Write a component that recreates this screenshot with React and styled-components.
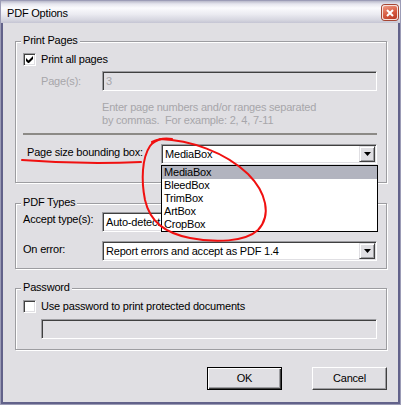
import styled, { createGlobalStyle } from "styled-components";

const GlobalStyle = createGlobalStyle`
  * { box-sizing: border-box; }
  body { margin: 0; background: #fff; }
`;

const FACE = "#e0dfe3";
const SHADOW = "#9d9da1";
const DARK = "#404040";
const GRAY_TEXT = "#a7a6aa";

const Window = styled.div`
  position: relative;
  width: 401px;
  height: 405px;
  display: flex;
  flex-direction: column;
  background: ${FACE};
  border: 1px solid #9c9cb6;
  font-family: "Liberation Sans", Arial, sans-serif;
  font-size: 11px;
  line-height: 13px;
  letter-spacing: -0.2px;
  color: #000;
`;

const TitleBar = styled.div`
  height: 22px;
  flex: none;
  display: flex;
  align-items: center;
  justify-content: space-between;
  padding: 2px 2px 0 6px;
  background: linear-gradient(
    180deg,
    #b9b9ca 0px,
    #e6e6ee 3px,
    #fbfbfd 7px,
    #ececf2 13px,
    #d6d6e0 19px,
    #c5c5d3 22px
  );
`;

const Title = styled.span`
  color: #000;
`;

const CloseButton = styled.button`
  width: 16px;
  height: 15px;
  padding: 0;
  margin-top: -1px;
  border: 1px solid #f6e2dc;
  border-radius: 3px;
  background: linear-gradient(160deg, #ef9a84 0%, #d65a3f 55%, #b83a25 100%);
  display: flex;
  align-items: center;
  justify-content: center;
  box-shadow: 0 0 0 1px #a64633;
`;

const Frame = styled.div`
  flex: 1;
  display: flex;
  flex-direction: column;
  border: 2px solid #62628a;
  border-top: none;
  padding: 18px 11px 0 12px;
`;

const Group = styled.div`
  position: relative;
  margin-top: ${({ $top }) => $top || 0}px;
  padding: ${({ $pad }) => $pad};
  border: 1px solid ${SHADOW};
  box-shadow: inset 1px 1px #fff, 1px 1px #fff;
  display: flex;
  flex-direction: column;
`;

const Legend = styled.span`
  position: absolute;
  top: -8px;
  left: 5px;
  padding: 0 2px;
  background: ${FACE};
`;

const CheckRow = styled.label`
  display: flex;
  align-items: center;
  gap: 5px;
  height: 13px;
`;

const CheckBox = styled.span`
  width: 13px;
  height: 13px;
  flex: none;
  display: flex;
  align-items: center;
  justify-content: center;
  background: #fff;
  border: 1px solid;
  border-color: ${SHADOW} #fff #fff ${SHADOW};
  box-shadow: inset 1px 1px ${DARK}, inset -1px -1px ${FACE};
`;

const FieldRow = styled.div`
  display: flex;
  align-items: ${({ $center }) => ($center ? "center" : "flex-start")};
  margin-top: ${({ $top }) => $top || 0}px;
  padding-left: ${({ $indent }) => $indent || 0}px;
`;

const Label = styled.span`
  flex: none;
  width: ${({ $width }) => $width}px;
  padding-left: ${({ $indent }) => $indent || 0}px;
  margin-top: ${({ $top }) => $top || 0}px;
  color: ${({ $disabled }) => ($disabled ? GRAY_TEXT : "#000")};
  white-space: nowrap;
`;

const TextBox = styled.div`
  flex: ${({ $grow }) => ($grow ? "1 1 auto" : "none")};
  height: 20px;
  margin-top: ${({ $top }) => $top || 0}px;
  margin-left: ${({ $left }) => $left || 0}px;
  margin-right: 1px;
  display: flex;
  align-items: center;
  padding-left: 3px;
  background: ${({ $disabled }) => ($disabled ? FACE : "#fff")};
  color: ${({ $disabled }) => ($disabled ? GRAY_TEXT : "#000")};
  border: 1px solid;
  border-color: ${SHADOW} #fff #fff ${SHADOW};
  box-shadow: inset 1px 1px ${DARK}, inset -1px -1px ${FACE};
`;

const Hint = styled.p`
  margin: 10px 0 0 79px;
  color: ${GRAY_TEXT};
  white-space: nowrap;
`;

const Separator = styled.div`
  height: 2px;
  margin-top: 6px;
  margin-right: 1px;
  background: #8c8a86;
`;

const ComboWrap = styled.div`
  position: relative;
  flex: 1;
  margin-right: 1px;
`;

const Combo = styled.div`
  height: 20px;
  display: flex;
  align-items: center;
  justify-content: space-between;
  padding: 0 1px 0 3px;
  background: #fff;
  border: 1px solid;
  border-color: ${SHADOW} #fff #fff ${SHADOW};
  box-shadow: inset 1px 1px ${DARK}, inset -1px -1px ${FACE};
  white-space: nowrap;
  overflow: hidden;
`;

const DropButton = styled.span`
  width: 16px;
  height: 16px;
  flex: none;
  display: flex;
  align-items: center;
  justify-content: center;
  background: ${FACE};
  border: 1px solid;
  border-color: ${FACE} ${DARK} ${DARK} ${FACE};
  box-shadow: inset 1px 1px #fff, inset -1px -1px ${SHADOW};
`;

const DropList = styled.ul`
  position: absolute;
  top: calc(100% + 1px);
  left: 0;
  right: -1px;
  z-index: 2;
  margin: 0;
  padding: 0;
  list-style: none;
  background: #fff;
  border: 1px solid #000;
`;

const DropItem = styled.li`
  height: 13px;
  padding-left: 2px;
  background: ${({ $selected }) => ($selected ? "#b2b4bf" : "transparent")};
`;

const ButtonRow = styled.div`
  display: flex;
  justify-content: flex-end;
  gap: 30px;
  margin-top: 17px;
`;

const Button = styled.button`
  width: 75px;
  height: 23px;
  padding: 0;
  font: inherit;
  letter-spacing: inherit;
  color: #000;
  background: ${FACE};
  border: 1px solid;
  border-color: ${({ $default }) =>
    $default ? "#000" : `#fff ${DARK} ${DARK} #fff`};
  box-shadow: ${({ $default }) =>
    $default
      ? `inset 1px 1px #fff, inset -1px -1px ${DARK}, inset -2px -2px ${SHADOW}`
      : `inset -1px -1px ${SHADOW}`};
`;

const Annotation = styled.svg`
  position: absolute;
  left: -1px;
  top: -1px;
  z-index: 5;
  pointer-events: none;
`;

function ComboBox({ value, options, selected }) {
  return (
    <ComboWrap>
      <Combo>
        <span>{value}</span>
        <DropButton>
          <svg width="7" height="4" viewBox="0 0 7 4">
            <path d="M0 0h7L3.5 4z" fill="#000" />
          </svg>
        </DropButton>
      </Combo>
      {options ? (
        <DropList>
          {options.map((o) => (
            <DropItem key={o} $selected={o === selected}>
              {o}
            </DropItem>
          ))}
        </DropList>
      ) : null}
    </ComboWrap>
  );
}

function Check({ checked }) {
  return (
    <CheckBox>
      {checked ? (
        <svg width="7" height="7" viewBox="0 0 7 7">
          <path d="M0 2v3l2 2h1l4-4V0L2.5 4.5z" fill="#000" />
        </svg>
      ) : null}
    </CheckBox>
  );
}

export default function App() {
  return (
    <>
      <GlobalStyle />
      <Window>
        <TitleBar>
          <Title>PDF Options</Title>
          <CloseButton type="button" aria-label="Close">
            <svg width="8" height="8" viewBox="0 0 8 8">
              <path d="M1 1l6 6M7 1L1 7" stroke="#fff" strokeWidth="2" />
            </svg>
          </CloseButton>
        </TitleBar>

        <Frame>
          <Group $pad="11px 8px 18px 7px">
            <Legend>Print Pages</Legend>
            <CheckRow>
              <Check checked />
              Print all pages
            </CheckRow>
            <FieldRow $top={5} $indent={18} $center>
              <Label $width={61} $disabled>Page(s):</Label>
              <TextBox $grow $disabled>3</TextBox>
            </FieldRow>
            <Hint>
              Enter page numbers and/or ranges separated
              <br />
              by commas.&nbsp; For example: 2, 4, 7-11
            </Hint>
            <Separator />
            <FieldRow $top={9}>
              <Label $width={138} $indent={4} $top={2}>
                Page size bounding box:
              </Label>
              <ComboBox
                value="MediaBox"
                options={["MediaBox", "BleedBox", "TrimBox", "ArtBox", "CropBox"]}
                selected="MediaBox"
              />
            </FieldRow>
          </Group>

          <Group $top={20} $pad="8px 8px 7px 7px">
            <Legend>PDF Types</Legend>
            <FieldRow>
              <Label $width={79} $top={1}>Accept type(s):</Label>
              <ComboBox value="Auto-detect" />
            </FieldRow>
            <FieldRow $top={9}>
              <Label $width={79} $top={2}>On error:</Label>
              <ComboBox value="Report errors and accept as PDF 1.4" />
            </FieldRow>
          </Group>

          <Group $top={19} $pad="11px 8px 10px 7px">
            <Legend>Password</Legend>
            <CheckRow>
              <Check />
              Use password to print protected documents
            </CheckRow>
            <TextBox $disabled $top={6} $left={18} />
          </Group>

          <ButtonRow>
            <Button type="button" $default>OK</Button>
            <Button type="button">Cancel</Button>
          </ButtonRow>
        </Frame>

        <Annotation width="401" height="405" viewBox="0 0 401 405">
          <g fill="none" stroke="#f01010" strokeWidth="2" strokeLinecap="round">
            <path d="M152 142C158 139 166 138 172 139" />
            <path d="M160 139C190 140 225 152 248 174C266 192 272 215 258 230C245 242 215 243 190 238C165 233 150 222 145 200C141 180 142 158 150 146C153 142 157 140 162 139" />
            <path d="M22 160C60 163 100 164 141 162" />
          </g>
        </Annotation>
      </Window>
    </>
  );
}
